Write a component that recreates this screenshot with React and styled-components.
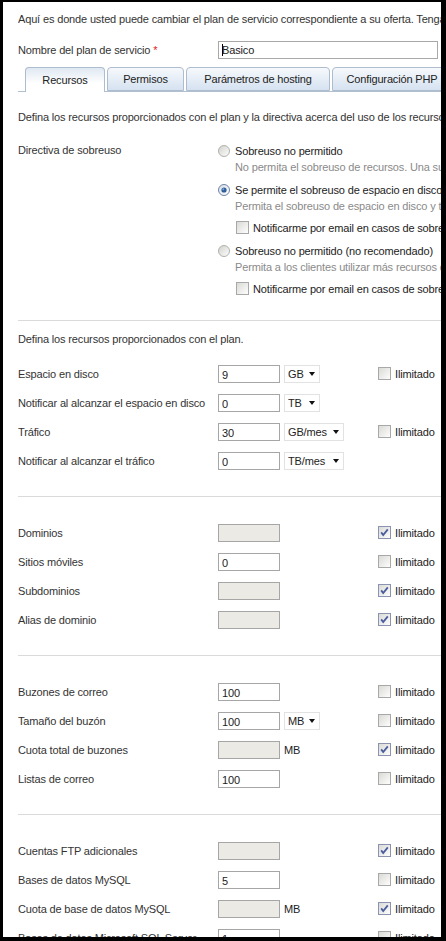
import React from 'react';
import styled, { createGlobalStyle } from 'styled-components';

const GlobalStyle = createGlobalStyle`
  html, body {
    margin: 0;
    padding: 0;
    background: #000;
  }
  * {
    box-sizing: border-box;
  }
`;

const RadioIcon = ({ checked }) => (
  <svg width="12" height="12" viewBox="0 0 12 12">
    <defs>
      <linearGradient id={checked ? 'rg1' : 'rg0'} x1="0" y1="0" x2="1" y2="1">
        <stop offset="0" stopColor={checked ? '#d6dde6' : '#d0d0cc'} />
        <stop offset="1" stopColor="#ffffff" />
      </linearGradient>
    </defs>
    <circle cx="6" cy="6" r="5.5" fill={`url(#${checked ? 'rg1' : 'rg0'})`} stroke={checked ? '#6f84a4' : '#b0b0ac'} />
    {checked && <circle cx="6" cy="6" r="2.6" fill="#2f5d98" />}
    {checked && <circle cx="5.3" cy="5.3" r="1" fill="#7aa6d8" />}
  </svg>
);

const CheckIcon = ({ checked }) => (
  <svg width="13" height="13" viewBox="0 0 13 13">
    <defs>
      <linearGradient id="cg" x1="0" y1="0" x2="1" y2="1">
        <stop offset="0" stopColor="#d8d8d4" />
        <stop offset="1" stopColor="#ffffff" />
      </linearGradient>
    </defs>
    <rect x="0.5" y="0.5" width="12" height="12" fill="url(#cg)" stroke={checked ? '#8a93b0' : '#a8a8a8'} />
    {checked && (
      <path d="M3.2 6.4 L5.2 9 L9.8 3.4" fill="none" stroke="#4b5d9e" strokeWidth="1.8" />
    )}
  </svg>
);

const Frame = styled.div`
  margin: 2px 5px 0 3px;
  height: 935px;
  overflow: hidden;
  background: #fff;
  padding: 10px 0 0 15px;
  font-family: "Liberation Sans", Arial, sans-serif;
  font-size: 11px;
  letter-spacing: -0.15px;
  color: #333;
  white-space: nowrap;
`;

const Line = styled.div`
  line-height: 15px;
  height: 15px;
  overflow: hidden;
`;

const NameRow = styled.div`
  display: flex;
  align-items: center;
  margin-top: 14px;
  height: 18px;
`;

const Label = styled.div`
  width: 200px;
  flex: none;
`;

const Req = styled.span`
  color: #e0201c;
`;

const NameField = styled.div`
  width: 220px;
  height: 18px;
  border: 1px solid #a8a8a8;
  display: flex;
  align-items: center;
  padding-left: 3px;
  color: #222;
`;

const Caret = styled.span`
  display: inline-block;
  width: 1px;
  height: 12px;
  background: #000;
  margin-right: -1px;
`;

const TabStrip = styled.div`
  display: flex;
  align-items: flex-end;
  margin-top: 9px;
  height: 24px;
  padding-left: 7px;
  border-bottom: 1px solid #b2bfce;
  gap: 2px;
`;

const Tab = styled.div`
  flex: none;
  width: ${(p) => p.w}px;
  height: ${(p) => (p.active ? 25 : 24)}px;
  margin-bottom: ${(p) => (p.active ? -1 : 0)}px;
  border: 1px solid #adbcce;
  border-bottom: ${(p) => (p.active ? 'none' : '1px solid #adbcce')};
  border-radius: 4px 4px 0 0;
  background: ${(p) =>
    p.active
      ? 'linear-gradient(#dfe8f2, #ffffff 65%)'
      : 'linear-gradient(#f6f9fc, #d5e2f1)'};
  display: flex;
  align-items: center;
  justify-content: center;
  color: #222;
  padding-bottom: 1px;
`;

const Panel = styled.div`
  padding-top: 18px;
`;

const Overuse = styled.div`
  display: flex;
  margin-top: 17px;
  padding-bottom: 23px;
`;

const TopLabel = styled.div`
  width: 200px;
  flex: none;
  line-height: 17px;
`;

const Options = styled.div`
  display: flex;
  flex-direction: column;
`;

const Option = styled.div`
  margin-top: ${(p) => p.gap || 0}px;
`;

const OptionTitle = styled.div`
  display: flex;
  align-items: center;
  gap: 5px;
  height: 17px;
  color: #222;
`;

const OptionDesc = styled.div`
  height: 17px;
  line-height: 17px;
  padding-left: 17px;
  color: #8a8a8a;
`;

const Notify = styled.div`
  display: flex;
  align-items: center;
  gap: 4px;
  height: 17px;
  margin-top: 4px;
  padding-left: 18px;
  color: #222;
`;

const Divider = styled.div`
  height: 1px;
  background: #dadada;
`;

const Section = styled.div`
  padding: ${(p) => p.top || 21}px 0 21px;
`;

const Intro = styled(Line)`
  margin-bottom: 12px;
`;

const Row = styled.div`
  display: grid;
  grid-template-columns: 200px 160px auto;
  align-items: center;
  height: 29px;
`;

const Field = styled.div`
  display: flex;
  align-items: center;
  gap: 4px;
`;

const Box = styled.div`
  width: 62px;
  height: 18px;
  border: 1px solid #a6a6a6;
  background: ${(p) => (p.disabled ? '#ebeae5' : '#fff')};
  padding: 2px 3px 0;
  line-height: 14px;
  color: #222;
`;

const Select = styled.div`
  width: ${(p) => p.w}px;
  height: 18px;
  border: 1px solid #e2e2e2;
  display: flex;
  align-items: center;
  justify-content: space-between;
  padding: 0 4px 0 3px;
  color: #222;
`;

const Arrow = styled.span`
  width: 0;
  height: 0;
  border-left: 3.5px solid transparent;
  border-right: 3.5px solid transparent;
  border-top: 4px solid #111;
`;

const Unit = styled.span`
  color: #222;
`;

const Unlimited = styled.div`
  display: flex;
  align-items: center;
  gap: 4px;
  color: #222;
`;

const sections = [
  [
    { label: 'Espacio en disco', value: '9', select: 'GB', sw: 36, check: false },
    { label: 'Notificar al alcanzar el espacio en disco', value: '0', select: 'TB', sw: 36 },
    { label: 'Tráfico', value: '30', select: 'GB/mes', sw: 60, check: false },
    { label: 'Notificar al alcanzar el tráfico', value: '0', select: 'TB/mes', sw: 60 },
  ],
  [
    { label: 'Dominios', disabled: true, check: true },
    { label: 'Sitios móviles', value: '0', check: false },
    { label: 'Subdominios', disabled: true, check: true },
    { label: 'Alias de dominio', disabled: true, check: true },
  ],
  [
    { label: 'Buzones de correo', value: '100', check: false },
    { label: 'Tamaño del buzón', value: '100', select: 'MB', sw: 36, check: false },
    { label: 'Cuota total de buzones', disabled: true, unit: 'MB', check: true },
    { label: 'Listas de correo', value: '100', check: false },
  ],
  [
    { label: 'Cuentas FTP adicionales', disabled: true, check: true },
    { label: 'Bases de datos MySQL', value: '5', check: false },
    { label: 'Cuota de base de datos MySQL', disabled: true, unit: 'MB', check: true },
    { label: 'Bases de datos Microsoft SQL Server', value: '1', check: false },
  ],
];

const ResourceRow = ({ r }) => (
  <Row>
    <div>{r.label}</div>
    <Field>
      <Box disabled={r.disabled}>{r.value}</Box>
      {r.select && (
        <Select w={r.sw}>
          {r.select}
          <Arrow />
        </Select>
      )}
      {r.unit && <Unit>{r.unit}</Unit>}
    </Field>
    {r.check !== undefined ? (
      <Unlimited>
        <CheckIcon checked={r.check} />
        Ilimitado
      </Unlimited>
    ) : (
      <span />
    )}
  </Row>
);

const App = () => {
  return (
    <>
      <GlobalStyle />
      <Frame>
        <Line>
          Aquí es donde usted puede cambiar el plan de servicio correspondiente a su oferta. Tenga en cuenta
        </Line>
        <NameRow>
          <Label>
            Nombre del plan de servicio <Req>*</Req>
          </Label>
          <NameField>
            <Caret />
            Basico
          </NameField>
        </NameRow>
        <TabStrip>
          <Tab active w={80}>Recursos</Tab>
          <Tab w={77}>Permisos</Tab>
          <Tab w={144}>Parámetros de hosting</Tab>
          <Tab w={120}>Configuración PHP</Tab>
        </TabStrip>
        <Panel>
          <Line>
            Defina los recursos proporcionados con el plan y la directiva acerca del uso de los recursos.
          </Line>
          <Overuse>
            <TopLabel>Directiva de sobreuso</TopLabel>
            <Options>
              <Option>
                <OptionTitle>
                  <RadioIcon />
                  Sobreuso no permitido
                </OptionTitle>
                <OptionDesc>No permita el sobreuso de recursos. Una suscripción</OptionDesc>
              </Option>
              <Option gap={5}>
                <OptionTitle>
                  <RadioIcon checked />
                  Se permite el sobreuso de espacio en disco y tráfico
                </OptionTitle>
                <OptionDesc>Permita el sobreuso de espacio en disco y tráfico</OptionDesc>
                <Notify>
                  <CheckIcon />
                  Notificarme por email en casos de sobreuso
                </Notify>
              </Option>
              <Option gap={6}>
                <OptionTitle>
                  <RadioIcon />
                  Sobreuso no permitido (no recomendado)
                </OptionTitle>
                <OptionDesc>Permita a los clientes utilizar más recursos de los</OptionDesc>
                <Notify>
                  <CheckIcon />
                  Notificarme por email en casos de sobreuso
                </Notify>
              </Option>
            </Options>
          </Overuse>
          {sections.map((rows, i) => (
            <React.Fragment key={i}>
              <Divider />
              <Section top={i === 0 ? 11 : 21}>
                {i === 0 && <Intro>Defina los recursos proporcionados con el plan.</Intro>}
                {rows.map((r) => (
                  <ResourceRow key={r.label} r={r} />
                ))}
              </Section>
            </React.Fragment>
          ))}
        </Panel>
      </Frame>
    </>
  );
};

export default App;
